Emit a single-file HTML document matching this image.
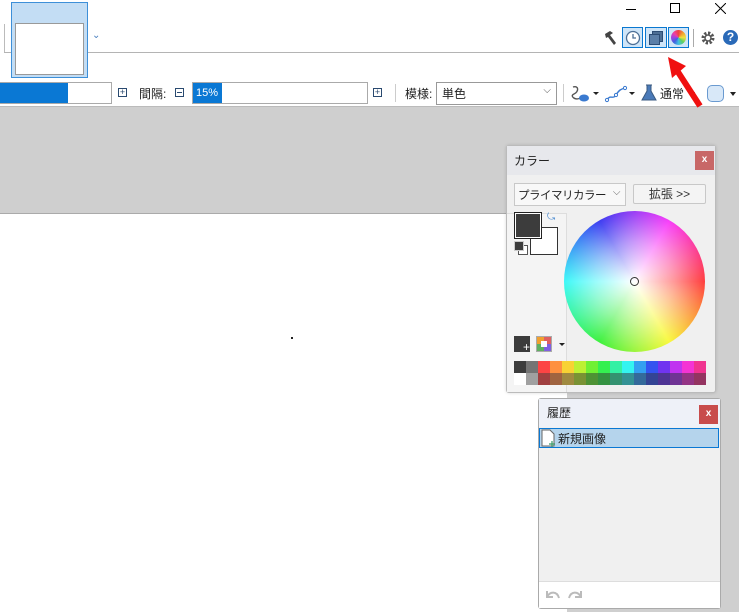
<!DOCTYPE html>
<html><head><meta charset="utf-8"><style>
*{margin:0;padding:0;box-sizing:border-box}
body{width:739px;height:612px;overflow:hidden;position:relative;background:#fff;font-family:"Liberation Sans","Noto Sans CJK JP",sans-serif;font-size:12px;color:#222}
.a{position:absolute}
</style></head><body>
<div class="a" style="left:0;top:0;width:739px;height:106px;background:#fff"></div>
<div class="a" style="left:4px;top:24px;width:1px;height:28px;background:#bbb"></div>
<div class="a" style="left:4px;top:52px;width:735px;height:1px;background:#b4b4b4"></div>
<div class="a" style="left:11px;top:2px;width:77px;height:76px;background:#c3ddf4;border:1px solid #3d8fd8"></div>
<div class="a" style="left:15px;top:23px;width:69px;height:52px;background:#fff;border:1px solid #999"></div>
<div class="a" style="left:92px;top:30px;font-size:10px;color:#4a80c0">⌄</div>
<div class="a" style="left:626px;top:9px;width:10px;height:1px;background:#000"></div>
<div class="a" style="left:670px;top:3px;width:10px;height:10px;border:1px solid #000"></div>
<svg class="a" style="left:715px;top:3px" width="11" height="11"><path d="M0 0L11 11M11 0L0 11" stroke="#000" stroke-width="1"/></svg>
<svg class="a" style="left:602px;top:30px" width="16" height="16"><path d="M3 4l5-3 3 2-3 2 6 8-2 2-6-8-2 1z" fill="#444"/></svg>
<div class="a" style="left:622px;top:27px;width:21px;height:21px;border:1px solid #0a78d0;background:#cfe5f8"></div>
<svg class="a" style="left:624px;top:29px" width="17" height="17"><circle cx="9" cy="9" r="6.5" fill="#fff" stroke="#4d6f95" stroke-width="1.3"/><path d="M9 5v4h3" stroke="#4d6f95" fill="none" stroke-width="1.3"/></svg>
<div class="a" style="left:645px;top:27px;width:22px;height:21px;border:1px solid #0a78d0;background:#cfe5f8"></div>
<div class="a" style="left:652px;top:31px;width:11px;height:11px;background:#4d6f95;border:1px solid #2d4d75"></div>
<div class="a" style="left:649px;top:34px;width:11px;height:11px;background:#5b7fa8;border:1px solid #2d4d75"></div>
<div class="a" style="left:668px;top:27px;width:21px;height:21px;border:1px solid #0a78d0;background:#cfe5f8"></div>
<div class="a" style="left:671px;top:30px;width:15px;height:15px;border-radius:50%;background:conic-gradient(#f04040,#f0a030,#f0e040,#60d060,#40c0e0,#4060e0,#a040e0,#f040a0,#f04040)"></div>
<div class="a" style="left:693px;top:29px;width:1px;height:18px;background:#aaa"></div>
<svg class="a" style="left:700px;top:30px" width="16" height="16"><circle cx="8" cy="8" r="5" fill="none" stroke="#555" stroke-width="3" stroke-dasharray="2.3 1.6"/><circle cx="8" cy="8" r="3" fill="none" stroke="#555" stroke-width="1.5"/></svg>
<div class="a" style="left:723px;top:30px;width:15px;height:15px;border-radius:50%;background:#2a6ab8;color:#fff;font-weight:bold;font-size:12px;text-align:center;line-height:15px">?</div>
<div class="a" style="left:0;top:82px;width:112px;height:22px;border:1px solid #aaa;background:#fff"></div>
<div class="a" style="left:0;top:83px;width:68px;height:20px;background:#0a78d4"></div>
<div class="a" style="left:118px;top:88px;width:9px;height:9px;border:1px solid #2a4a70;font-size:9px;line-height:7px;text-align:center;color:#2a4a70">+</div>
<div class="a" style="left:139px;top:85px;font-size:12px">間隔:</div>
<div class="a" style="left:175px;top:88px;width:9px;height:9px;border:1px solid #2a4a70"></div><div class="a" style="left:177px;top:92px;width:5px;height:1px;background:#2a4a70"></div>
<div class="a" style="left:192px;top:82px;width:176px;height:22px;border:1px solid #aaa;background:#fff"></div>
<div class="a" style="left:193px;top:83px;width:29px;height:20px;background:#0a78d4;color:#fff;font-size:11px;line-height:20px;padding-left:3px">15%</div>
<div class="a" style="left:373px;top:88px;width:9px;height:9px;border:1px solid #2a4a70;font-size:9px;line-height:7px;text-align:center;color:#2a4a70">+</div>
<div class="a" style="left:395px;top:84px;width:1px;height:18px;background:#ccc"></div>
<div class="a" style="left:405px;top:85px">模様:</div>
<div class="a" style="left:436px;top:82px;width:121px;height:23px;border:1px solid #999;background:#fff;padding:2px 5px">単色<span style="position:absolute;right:5px;top:2px;color:#555;font-size:10px">⌵</span></div>
<div class="a" style="left:563px;top:84px;width:1px;height:18px;background:#ccc"></div>
<svg class="a" style="left:570px;top:84px" width="40" height="20"><path d="M3 3c6-2 6 5 1 7s2 7 6 4" fill="none" stroke="#555" stroke-width="1.4"/><ellipse cx="14" cy="14" rx="5" ry="3.5" fill="#3a7ad0"/><path d="M23 8l3 3 3-3z" fill="#222"/></svg>
<svg class="a" style="left:604px;top:84px" width="34" height="20"><path d="M3 16c3-6 6 0 9-5s5-6 9-7" fill="none" stroke="#3a7ad0" stroke-width="1.4"/><circle cx="3" cy="16" r="1.6" fill="#fff" stroke="#3a7ad0"/><circle cx="12" cy="11" r="1.6" fill="#fff" stroke="#3a7ad0"/><circle cx="21" cy="4" r="1.6" fill="#fff" stroke="#3a7ad0"/><path d="M25 8l3 3 3-3z" fill="#222"/></svg>
<svg class="a" style="left:640px;top:83px" width="18" height="20"><path d="M6 2h6M7 2v6l-5 9h14l-5-9V2" fill="#4a7ab8" stroke="#3a5a80"/></svg>
<div class="a" style="left:660px;top:85px">通常</div>
<div class="a" style="left:689px;top:92px;border:3px solid transparent;border-top:4px solid #222"></div>
<div class="a" style="left:707px;top:85px;width:17px;height:17px;border-radius:5px;background:#d8e8f8;border:1px solid #6a9ad0"></div>
<div class="a" style="left:730px;top:92px;border:3px solid transparent;border-top:4px solid #222"></div>
<div class="a" style="left:0;top:106px;width:739px;height:506px;background:#cfcfcf;border-top:1px solid #bbb"></div>
<div class="a" style="left:0;top:213px;width:567px;height:399px;background:#fff;border-top:1px solid #aaa"></div>
<div class="a" style="left:291px;top:337px;width:2px;height:2px;background:#222"></div>
<div class="a" style="left:506px;top:145px;width:210px;height:248px;background:#f0f0f0;border:1px solid #bbb;border-radius:3px;box-shadow:0 0 3px rgba(0,0,0,.15)"></div>
<div class="a" style="left:507px;top:146px;width:208px;height:29px;background:#e7e8ec"></div>
<div class="a" style="left:514px;top:152px;font-size:12px">カラー</div>
<div class="a" style="left:695px;top:151px;width:19px;height:19px;background:#c86767;color:#fff;font-size:10px;font-weight:bold;text-align:center;line-height:18px">x</div>
<div class="a" style="left:514px;top:183px;width:112px;height:23px;border:1px solid #c8c8c8;background:#f8f8f8;padding:3px 3px;font-size:11.5px;letter-spacing:-0.5px;white-space:nowrap">プライマリカラー<span style="position:absolute;right:5px;top:3px;color:#666;font-size:10px">⌵</span></div>
<div class="a" style="left:633px;top:184px;width:73px;height:20px;border:1px solid #c8c8c8;border-radius:2px;background:#f4f4f4;text-align:center;line-height:18px;font-size:12px;color:#333">拡張 &gt;&gt;</div>
<div class="a" style="left:507px;top:213px;width:60px;height:179px;background:#f4f4f4;border-top:1px solid #ddd;border-right:1px solid #ddd"></div>
<div class="a" style="left:530px;top:227px;width:28px;height:28px;background:#fff;border:1px solid #333"></div>
<div class="a" style="left:514px;top:212px;width:28px;height:27px;background:#3c3c3c;border:1px solid #222;box-shadow:inset 0 0 0 1px #fff"></div>
<div class="a" style="left:547px;top:212px;color:#4a8ad0;font-size:10px">⤿</div>
<div class="a" style="left:518px;top:245px;width:10px;height:10px;background:#fff;border:1px solid #555"></div>
<div class="a" style="left:514px;top:241px;width:10px;height:10px;background:#3c3c3c;border:1px solid #ccc"></div>
<div class="a" style="left:564px;top:211px;width:141px;height:141px;border-radius:50%;background:radial-gradient(circle,rgba(255,255,255,1) 0%,rgba(255,255,255,.5) 40%,rgba(255,255,255,0) 75%),conic-gradient(from 90deg,#ff3030,#f8f830 60deg,#30f030 120deg,#30f8f8 180deg,#3030f0 240deg,#f830f8 300deg,#ff3030 360deg)"></div>
<div class="a" style="left:630px;top:277px;width:9px;height:9px;border-radius:50%;border:1px solid #333"></div>
<div class="a" style="left:514px;top:336px;width:16px;height:16px;background:#3c3c3c;color:#fff;font-size:12px;line-height:22px;text-align:right">+</div>
<div class="a" style="left:536px;top:336px;width:16px;height:16px;border:1px solid #aaa;background:conic-gradient(#e06060 0 25%,#8060e0 0 50%,#60b060 0 75%,#f0a030 0)"></div>
<div class="a" style="left:541px;top:341px;width:6px;height:6px;background:#fff"></div>
<div class="a" style="left:559px;top:343px;border:3px solid transparent;border-top:3px solid #222"></div>
<div class="a" style="left:514px;top:361px;display:grid;grid-template-columns:repeat(16,12px);grid-auto-rows:12px">
<i style="background:#3c3c3c"></i><i style="background:#747474"></i><i style="background:#fc4444"></i><i style="background:#fe9040"></i><i style="background:#f8d234"></i><i style="background:#bdf034"></i><i style="background:#70f034"></i><i style="background:#34f050"></i><i style="background:#34f0a4"></i><i style="background:#34f4f0"></i><i style="background:#34a0f0"></i><i style="background:#3454f0"></i><i style="background:#7034f0"></i><i style="background:#c034f0"></i><i style="background:#f434d4"></i><i style="background:#f03490"></i>
<i style="background:#fff"></i><i style="background:#a0a0a0"></i><i style="background:#a04040"></i><i style="background:#a06440"></i><i style="background:#a08a40"></i><i style="background:#7a9234"></i><i style="background:#4e9234"></i><i style="background:#349240"></i><i style="background:#349270"></i><i style="background:#349294"></i><i style="background:#346a9a"></i><i style="background:#344494"></i><i style="background:#4e3494"></i><i style="background:#703494"></i><i style="background:#943484"></i><i style="background:#943460"></i>
</div>
<div class="a" style="left:538px;top:398px;width:183px;height:211px;background:#f0f0f0;border:1px solid #aaa;border-radius:3px"></div>
<div class="a" style="left:539px;top:399px;width:181px;height:28px;background:#eef1f8"></div>
<div class="a" style="left:547px;top:404px;font-size:12px">履歴</div>
<div class="a" style="left:699px;top:405px;width:19px;height:19px;background:#c84c4c;color:#fff;font-size:10px;font-weight:bold;text-align:center;line-height:18px">x</div>
<div class="a" style="left:539px;top:428px;width:180px;height:20px;background:#b5d4ec;border:1px solid #0a78d4"></div>
<svg class="a" style="left:541px;top:429px" width="16" height="18"><path d="M1 1h8l4 4v12H1z" fill="#fff" stroke="#666"/><path d="M11 12v6M8 15h6" stroke="#3a9a6a" stroke-width="1.2"/></svg>
<div class="a" style="left:558px;top:430px;font-size:12px">新規画像</div>
<div class="a" style="left:539px;top:581px;width:181px;height:27px;background:#fff;border-top:1px solid #ddd"></div>
<svg class="a" style="left:543px;top:587px" width="42" height="16"><path d="M4 4v6h6M4 10c3-6 10-6 12 1" fill="none" stroke="#bbb" stroke-width="2"/><path d="M38 4v6h-6M38 10c-3-6-10-6-12 1" fill="none" stroke="#bbb" stroke-width="2"/></svg>
<svg class="a" style="left:660px;top:52px" width="50" height="60"><path d="M40 54L18 20" stroke="#f01010" stroke-width="6"/><path d="M8 5L26 14L12 26z" fill="#f01010"/></svg>
</body></html>
